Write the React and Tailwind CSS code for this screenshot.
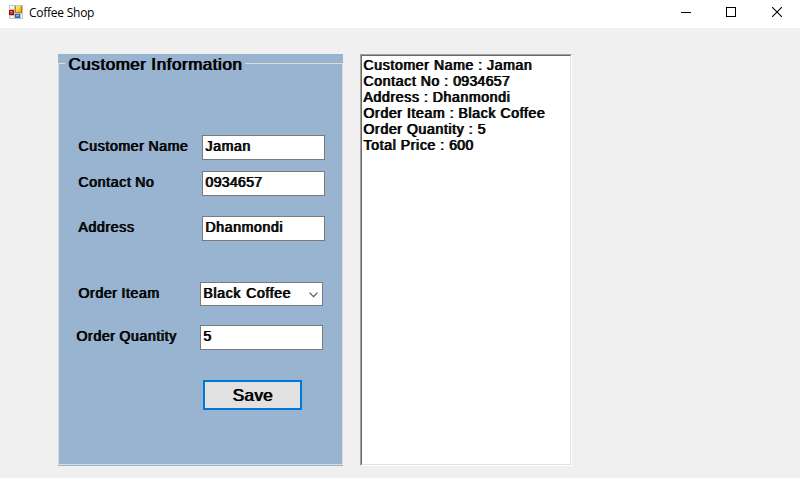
import React from "react";

const bold = "whitespace-pre text-black [text-shadow:1px_0_0_#000]";
const body = "text-[14px] leading-4 tracking-[0.68px] " + bold;

// Digits sit slightly closer together than letters.
function Text({ children }) {
  return children.split(/(\d+)/).map((part, i) =>
    i % 2 ? <span key={i} className="tracking-[0.35px]">{part}</span> : part
  );
}

function Row({ label, value, row, labelBox, select }) {
  return (
    <div className={"flex items-start [word-spacing:-0.8px] " + row}>
      <label className={"shrink-0 pt-[3px] " + labelBox + " " + body}>{label}</label>
      <div className={"flex w-[123px] shrink-0 border border-[#7a7a7a] bg-white pl-[2px] pt-[2px] " + (select ? "h-6 [word-spacing:0.5px]" : "h-[25px]") + " " + body}>
        <span><Text>{value}</Text></span>
        {select && (
          <svg className="mr-1 ml-auto mt-[7px]" width="9" height="6" viewBox="0 0 9 6" fill="none" stroke="#505050" strokeWidth="1.1">
            <path d="M.5 .7 4.5 4.7 8.5 .7" />
          </svg>
        )}
      </div>
    </div>
  );
}

function AppIcon() {
  return (
    <svg width="14" height="14" viewBox="0 0 14 14" shapeRendering="crispEdges">
      <defs>
        <linearGradient id="gold" x1="0" y1="0" x2="1" y2="1">
          <stop offset="0" stopColor="#ffef9a" />
          <stop offset="1" stopColor="#e9a900" />
        </linearGradient>
      </defs>
      <path d="M0 0H14V14H0Z" fill="#c4c4c4" />
      <path d="M1 1H5V4H1ZM1 11H5V13H1ZM12 9H13V13H12Z" fill="#f4f4f4" />
      <path d="M6 1H13V8H6Z" fill="#b98200" />
      <path d="M7 1H12V7H7Z" fill="url(#gold)" />
      <path d="M0 5H5V10H0Z" fill="#8e1208" />
      <path d="M1 6H4V9H1Z" fill="#d8331f" />
      <path d="M1 6H3V7H1Z" fill="#f08a78" />
      <path d="M6 9H11V13H6Z" fill="#2463c9" />
      <path d="M7 10H10V11H7Z" fill="#8fbcf5" />
      <path d="M7 11H10V12H7Z" fill="#4a8ae6" />
    </svg>
  );
}

const order = [
  "Customer Name : Jaman",
  "Contact No : 0934657",
  "Address : Dhanmondi",
  "Order Iteam : Black Coffee",
  "Order Quantity : 5",
  "Total Price : 600",
];

export default function App() {
  return (
    <div className="flex h-[478px] w-[800px] flex-col overflow-hidden bg-[#f0f0f0] font-['Liberation_Sans',Arial,sans-serif]">
      <header className="flex h-7 shrink-0 items-start bg-white pl-[9px]">
        <div className="pt-[5px]"><AppIcon /></div>
        <h1 className="pt-[5px] pl-[6px] font-['Open_Sans',sans-serif] text-[12px] leading-4 tracking-[-0.25px] text-black">Coffee Shop</h1>
        <div className="ml-auto flex pt-[7px] pr-[18px] gap-[35px]">
          <svg width="10" height="10" className="-translate-x-px" shapeRendering="crispEdges"><path d="M0 5H10V6H0Z" /></svg>
          <svg width="10" height="10" className="-translate-x-px" shapeRendering="crispEdges"><path d="M.5 .5H9.5V9.5H.5Z" fill="none" stroke="#000" /></svg>
          <svg width="10" height="10"><path d="M0 0 10 10M10 0 0 10" fill="none" stroke="#000" strokeWidth="1.1" /></svg>
        </div>
      </header>
      <main className="flex gap-[17px] pt-[26px] pl-[58px]">
        <section className="h-[412px] w-[285px] bg-[#99b4d1] pt-[9px]">
          <div className="h-[402px] border border-[#dcdcdc]">
            <h2 className={"-mt-[10px] ml-[6px] h-5 w-[180px] bg-[#99b4d1] pt-px pl-[3px] text-[17px] leading-5 tracking-[0.55px] [word-spacing:-0.5px] " + bold}>Customer Information</h2>
            <form>
              <Row label="Customer Name" value="Jaman" row="mt-[61px] pl-[19px]" labelBox="w-[124px]" />
              <Row label="Contact No" value="0934657" row="mt-[11px] pl-[19px]" labelBox="w-[124px]" />
              <Row label="Address" value="Dhanmondi" row="mt-5 pl-[19px]" labelBox="w-[124px]" />
              <Row label="Order Iteam" value="Black Coffee" row="mt-[41px] pl-[19px]" labelBox="w-[122px]" select />
              <Row label="Order Quantity" value="5" row="mt-[19px] pl-[17px]" labelBox="w-[124px]" />
              <button type="button" className={"mt-[30px] ml-[144px] flex h-[30px] w-[99px] items-center justify-center border-2 border-[#0078d7] bg-[#e1e1e1] pt-px text-[17px] leading-5 tracking-[0.4px] " + bold}>Save</button>
            </form>
          </div>
        </section>
        <section className="h-[412px] w-[212px] border border-t-[#a0a0a0] border-r-white border-b-white border-l-[#a0a0a0]">
          <ul className={"h-full border border-t-[#696969] border-r-[#e3e3e3] border-b-[#e3e3e3] border-l-[#696969] bg-white pt-px pl-px [word-spacing:-0.3px] " + body}>
            {order.map((line) => <li key={line}><Text>{line}</Text></li>)}
          </ul>
        </section>
      </main>
    </div>
  );
}
